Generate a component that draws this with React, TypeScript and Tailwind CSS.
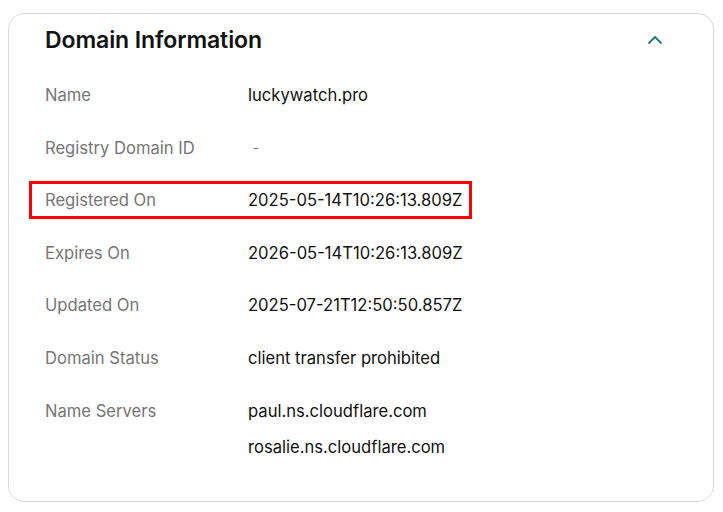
import React from 'react';

const rows: { label: string; values: string[]; muted?: boolean; highlight?: boolean }[] = [
  { label: 'Name', values: ['luckywatch.pro'] },
  { label: 'Registry Domain ID', values: ['-'], muted: true },
  { label: 'Registered On', values: ['2025-05-14T10:26:13.809Z'], highlight: true },
  { label: 'Expires On', values: ['2026-05-14T10:26:13.809Z'] },
  { label: 'Updated On', values: ['2025-07-21T12:50:50.857Z'] },
  { label: 'Domain Status', values: ['client transfer prohibited'] },
  { label: 'Name Servers', values: ['paul.ns.cloudflare.com', 'rosalie.ns.cloudflare.com'] },
];

const ChevronUp = () => (
  <svg width="16" height="10" viewBox="0 0 16 10" fill="none">
    <path d="M1.5 8.5L8 2l6.5 6.5" stroke="#1b7a78" strokeWidth="1.8" />
  </svg>
);

export default function App() {
  return (
    <div className="w-[723px] h-[512px] bg-white pt-[13px] pl-[8px] font-['Inter',sans-serif]">
      <div className="w-[706px] h-[489px] border border-[#d6dbe1] rounded-[16px] pl-[36px] pr-[50px] pt-[11px]">
        <div className="flex items-center justify-between h-[30px]">
          <h2 className="text-[23px] font-semibold text-[#111111] tracking-[-0.1px]">Domain Information</h2>
          <ChevronUp />
        </div>
        <div className="mt-[29px] flex flex-col">
          {rows.map((r) => (
            <div key={r.label} className="relative flex text-[16.6px]">
              {r.highlight && (
                <div className="absolute -left-[16px] top-[-8px] w-[443px] h-[38px] border-[3px] border-[#ff0000]" />
              )}
              <div className="w-[203px] shrink-0 text-[#767676] leading-[22px]">{r.label}</div>
              <div className="flex flex-col gap-[14px]">
                {r.values.map((v) => (
                  <div
                    key={v}
                    className={r.muted ? 'text-[#767676] leading-[22px] pl-[5px] text-[13px]' : 'text-[#111111] leading-[22px]'}
                  >
                    {v}
                  </div>
                ))}
              </div>
              <div className="h-[52.6px]" />
            </div>
          ))}
        </div>
      </div>
    </div>
  );
}
